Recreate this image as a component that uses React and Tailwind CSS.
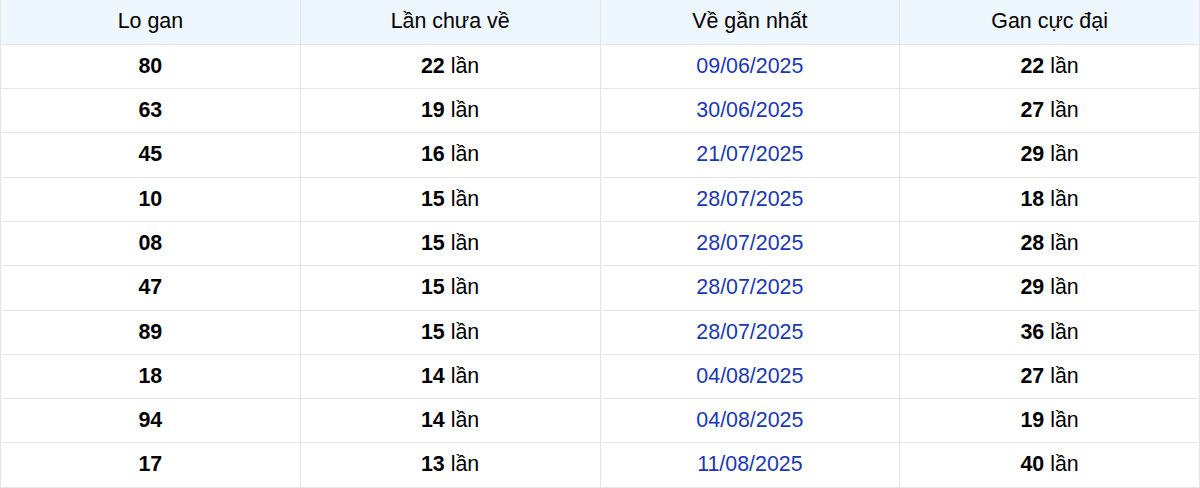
import React from 'react';

const rows = [
    ['80', '22', '09/06/2025', '22'],
    ['63', '19', '30/06/2025', '27'],
    ['45', '16', '21/07/2025', '29'],
    ['10', '15', '28/07/2025', '18'],
    ['08', '15', '28/07/2025', '28'],
    ['47', '15', '28/07/2025', '29'],
    ['89', '15', '28/07/2025', '36'],
    ['18', '14', '04/08/2025', '27'],
    ['94', '14', '04/08/2025', '19'],
    ['17', '13', '11/08/2025', '40'],
];

export default function App() {
    const cell = 'border border-[#e3e5e8] text-center align-middle h-[44.3px] p-0';

    return (
        <div className="bg-white w-[1200px] h-[488px] overflow-hidden" style={{ fontFamily: '"Liberation Sans", Arial, sans-serif' }}>
            <table className="w-full border-collapse table-fixed text-[21.4px] leading-none text-black">
                <thead>
                    <tr className="bg-[#eef6fe]">
                        <th className={`${cell} border-t-0 font-normal`}>Lo gan</th>
                        <th className={`${cell} border-t-0 font-normal`}>Lần chưa về</th>
                        <th className={`${cell} border-t-0 font-normal`}>Về gần nhất</th>
                        <th className={`${cell} border-t-0 font-normal`}>Gan cực đại</th>
                    </tr>
                </thead>
                <tbody>
                    {rows.map((r, i) => (
                        <tr key={i}>
                            <td className={`${cell} font-bold`}>{r[0]}</td>
                            <td className={cell}><b>{r[1]}</b> lần</td>
                            <td className={`${cell} text-[#1838b8]`}>{r[2]}</td>
                            <td className={cell}><b>{r[3]}</b> lần</td>
                        </tr>
                    ))}
                </tbody>
            </table>
        </div>
    );
}
